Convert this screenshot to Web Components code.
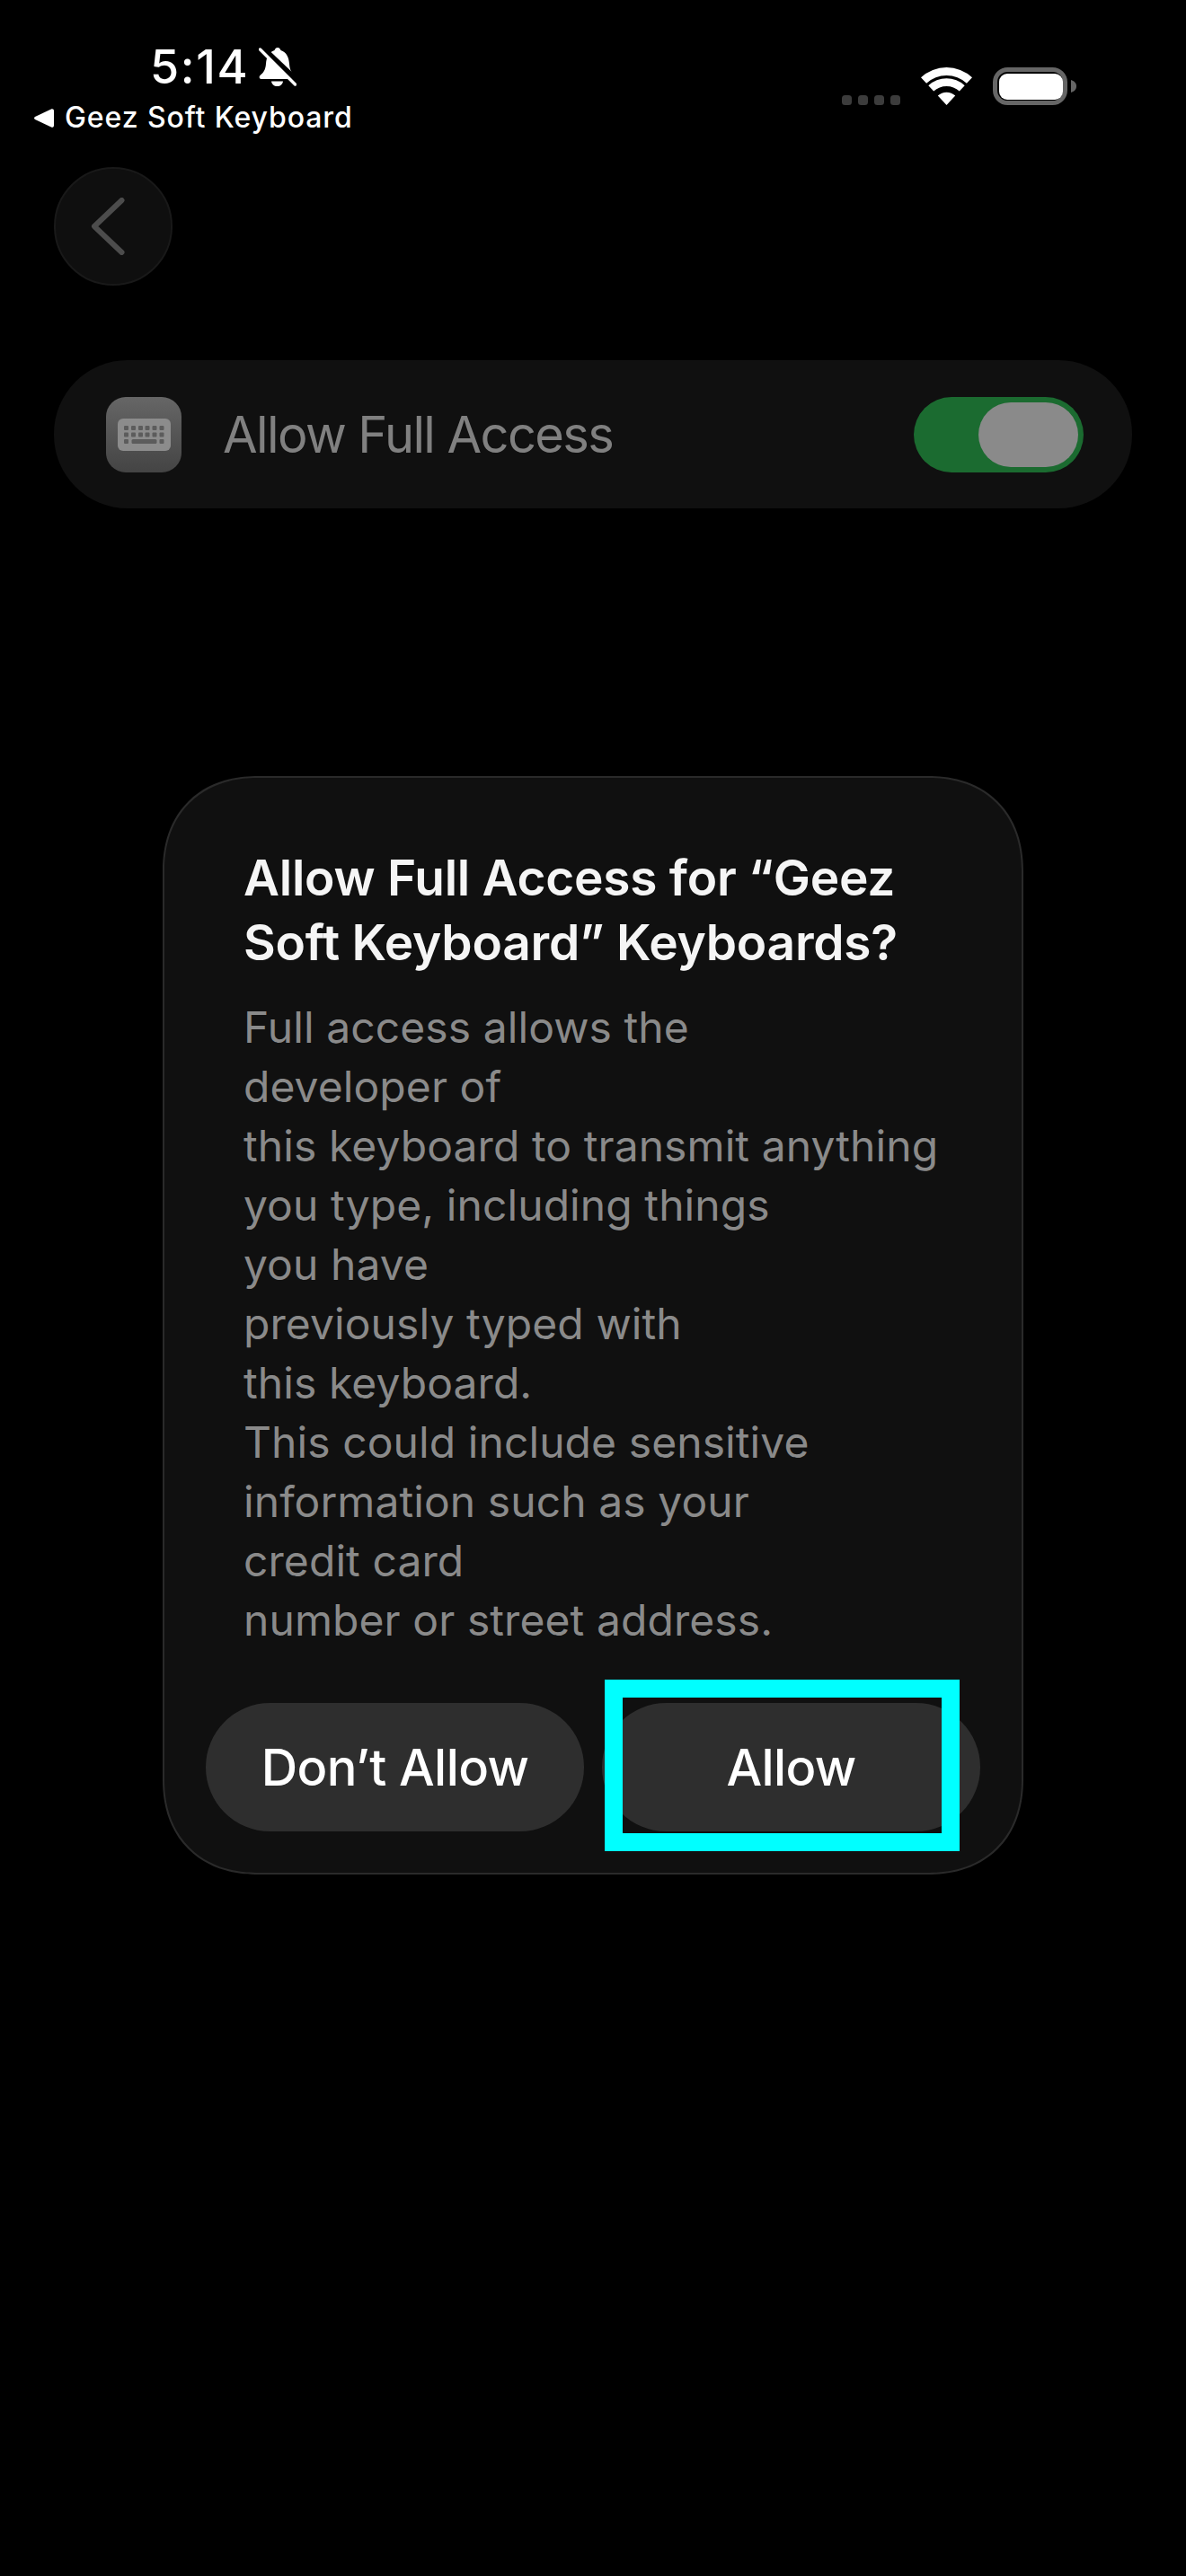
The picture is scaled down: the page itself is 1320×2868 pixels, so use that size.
<!DOCTYPE html>
<html lang="en">
<head>
<meta charset="utf-8">
<title>Allow Full Access</title>
<style>
  html, body { margin: 0; padding: 0; background: #000; }
  body { font-family: Inter, "Liberation Sans", sans-serif; }
</style>
</head>
<body>
<app-screen>
  <status-bar></status-bar>
  <back-button></back-button>
  <setting-row label="Allow Full Access"></setting-row>
  <alert-dialog>
    <span slot="title">Allow Full Access for “Geez<br>Soft Keyboard” Keyboards?</span>
    <span slot="body">Full access allows the<br>developer of<br>this keyboard to transmit anything<br>you type, including things<br>you have<br>previously typed with<br>this keyboard.<br>This could include sensitive<br>information such as your<br>credit card<br>number or street address.</span>
    <dialog-button slot="actions">Don’t Allow</dialog-button>
    <dialog-button slot="actions">Allow</dialog-button>
  </alert-dialog>
</app-screen>
<script>
function component(name, css, html, setup) {
  customElements.define(name, class extends HTMLElement {
    constructor() {
      super();
      const root = this.attachShadow({ mode: 'open' });
      root.innerHTML = '<style>' + css + '</style>' + html;
    }
    connectedCallback() { if (setup) setup(this); }
  });
}

component('app-screen', `
  :host { display:flex; flex-direction:column; width:1320px; height:2868px; overflow:hidden; background:#000; color:#fff;
          font-family: Inter, "Liberation Sans", sans-serif; }
`, `<slot></slot>`);

component('status-bar', `
  :host { display:flex; justify-content:space-between; align-items:flex-start; height:186px; box-sizing:border-box; flex:none;
          padding:0 122px 0 38px; }
  .left { display:flex; flex-direction:column; padding-top:45px; }
  .time-row { display:flex; align-items:flex-start; margin-left:129px; }
  .time { font-size:52px; line-height:60px; font-weight:500; letter-spacing:1.7px; }
  .bell { width:42px; height:43px; margin:8px 0 0 11px; display:block; }
  .app { display:flex; align-items:center; margin-top:6px; height:40px; }
  .tri { width:22px; height:21px; display:block; margin-right:12px; }
  .app span { font-size:32px; line-height:40px; font-weight:500; letter-spacing:.9px; white-space:nowrap; }
  .right { display:flex; align-items:flex-end; gap:23px; padding-top:75px; }
  .dots { display:flex; gap:7px; }
  .dots i { display:block; width:11px; height:11px; border-radius:3.5px; background:#3c3c3c; }
  svg { display:block; }
`, `
  <div class="left">
    <div class="time-row">
      <span class="time">5:14</span>
      <svg class="bell" viewBox="0 0 42 43" aria-hidden="true">
        <path fill="#fff" d="M21 0c-2 0-3 1.5-3.5 3C11 5 8.5 11 8 18c-.5 7-3 10-6.5 13C0 32.500.5 35 3 35h35c3 0 3.500-2.500 2-4-3.500-3-5.500-6-6-13-.5-7-3-13-9.500-15C24 1.500 23 0 21 0Z"/>
        <path fill="#fff" d="M14 37.500h13c-.5 3.500-3 5.500-6.500 5.500S14.500 41 14 37.500Z"/>
        <path stroke="#000" stroke-width="6" d="M3-1 44 38"/>
        <path stroke="#fff" stroke-width="3.400" stroke-linecap="round" d="M1.500 2 40.500 41"/>
      </svg>
    </div>
    <div class="app">
      <svg class="tri" viewBox="0 0 22 21" aria-hidden="true"><path fill="#fff" d="M1 9 19 .5c1.500-.7 3 .2 3 1.800v16.400c0 1.600-1.500 2.500-3 1.800L1 12c-1.300-.7-1.300-2.300 0-3Z"/></svg>
      <span>Geez Soft Keyboard</span>
    </div>
  </div>
  <div class="right">
    <div class="dots"><i></i><i></i><i></i><i></i></div>
    <svg width="57" height="42" viewBox="0 0 57 42" aria-hidden="true">
      <path fill="#fff" d="M0 11.200A42 42 0 0 1 57 11.200L50.900 17.800A33 33 0 0 0 6.100 17.800Z"/>
      <path fill="#fff" d="M8.300 20.200A29.700 29.700 0 0 1 48.700 20.200L42.800 26.600A21 21 0 0 0 14.200 26.600Z"/>
      <path fill="#fff" d="M18.800 31.500A14.300 14.300 0 0 1 38.200 31.500L28.500 42Z"/>
    </svg>
    <svg width="93" height="42" viewBox="0 0 93 42" aria-hidden="true">
      <rect x="2.500" y="2.500" width="78" height="37" rx="14" fill="none" stroke="#666" stroke-width="5"/>
      <rect x="7" y="7" width="71" height="29" rx="9" fill="#fff"/>
      <path fill="#666" d="M87 14c3 1 6 3 6 7s-3 6-6 7Z"/>
    </svg>
  </div>
`);

component('back-button', `
  :host { display:flex; flex:none; align-items:center; justify-content:center; width:132px; height:132px; margin-left:60px;
          box-sizing:border-box; border:2px solid #191919; border-radius:50%; background:#0f0f0f; }
  svg { display:block; margin-right:12px; }
`, `
  <svg width="38" height="64" viewBox="0 0 38 64" aria-hidden="true">
    <path d="M34.500 3 4 32l30.500 29" fill="none" stroke="#4c4c4c" stroke-width="6" stroke-linecap="round" stroke-linejoin="round"/>
  </svg>
`);

component('toggle-switch', `
  :host { display:flex; justify-content:flex-end; align-items:center; width:189px; height:84px; box-sizing:border-box;
          padding:0 6px; border-radius:42px; background:#1b6b30; flex:none; }
  i { display:block; width:111px; height:72px; border-radius:36px; background:#8a8a8a; }
`, `<i></i>`);

component('setting-row', `
  :host { display:flex; flex:none; align-items:center; height:165px; margin:83px 60px 0; box-sizing:border-box; padding:0 54px 0 58px;
          border-radius:82px; background:#101010; }
  .icon { width:84px; height:84px; flex:none; border-radius:22px; background:linear-gradient(#666,#444);
          display:flex; align-items:flex-start; justify-content:center; padding-top:24px; box-sizing:border-box; }
  .label { flex:1; margin-left:46px; font-size:56px; line-height:68px; color:#808080; letter-spacing:-1.6px; }
  svg { display:block; }
`, `
  <div class="icon">
    <svg width="59" height="36" viewBox="0 0 59 36" aria-hidden="true">
      <rect width="59" height="36" rx="6" fill="#8c8c8c"/>
      <g fill="#5c5c5c">
        <rect x="7" y="8" width="5" height="5" rx="1"/><rect x="15" y="8" width="5" height="5" rx="1"/><rect x="23" y="8" width="5" height="5" rx="1"/><rect x="30.500" y="8" width="5" height="5" rx="1"/><rect x="38.500" y="8" width="5" height="5" rx="1"/><rect x="46.500" y="8" width="5" height="5" rx="1"/>
        <rect x="7" y="15.500" width="5" height="5" rx="1"/><rect x="15" y="15.500" width="5" height="5" rx="1"/><rect x="23" y="15.500" width="5" height="5" rx="1"/><rect x="30.500" y="15.500" width="5" height="5" rx="1"/><rect x="38.500" y="15.500" width="5" height="5" rx="1"/><rect x="46.500" y="15.500" width="5" height="5" rx="1"/>
        <rect x="7" y="23" width="5" height="5" rx="1"/><rect x="15.500" y="23" width="28" height="5" rx="1.500"/><rect x="46.500" y="23" width="5" height="5" rx="1"/>
      </g>
    </svg>
  </div>
  <span class="label"></span>
  <toggle-switch></toggle-switch>
`, el => { el.shadowRoot.querySelector('.label').textContent = el.getAttribute('label'); });

component('dialog-button', `
  :host { display:flex; align-items:center; justify-content:center; height:143px; flex:1 1 0; border-radius:72px;
          background:#2e2e2e; color:#fff; font-size:56px; font-weight:500; letter-spacing:-.6px; white-space:nowrap; }
`, `<slot></slot>`);

component('alert-dialog', `
  :host { display:block; flex:none; width:958px; margin:298px 0 0 181px; box-sizing:border-box; padding:75px 46px 46px;
          border:2px solid #2a2a2a; border-radius:106px; corner-shape:superellipse(1.15); background:#101010; }
  .text { padding:0 42px; }
  .title { font-size:55px; line-height:72px; font-weight:600; color:#f5f5f5; letter-spacing:-.25px; white-space:nowrap; }
  .body { margin-top:26px; font-size:48px; line-height:66px; color:#8a8a8a; letter-spacing:.08px; white-space:nowrap; }
  .actions { position:relative; display:flex; gap:20px; margin-top:59px; }
  .mark { position:absolute; left:444px; top:-26px; width:395px; height:191px; box-sizing:border-box; border:20px solid #0ff; }
`, `
  <div class="text">
    <div class="title"><slot name="title"></slot></div>
    <div class="body"><slot name="body"></slot></div>
  </div>
  <div class="actions"><slot name="actions"></slot><div class="mark"></div></div>
`);
</script>
</body>
</html>
